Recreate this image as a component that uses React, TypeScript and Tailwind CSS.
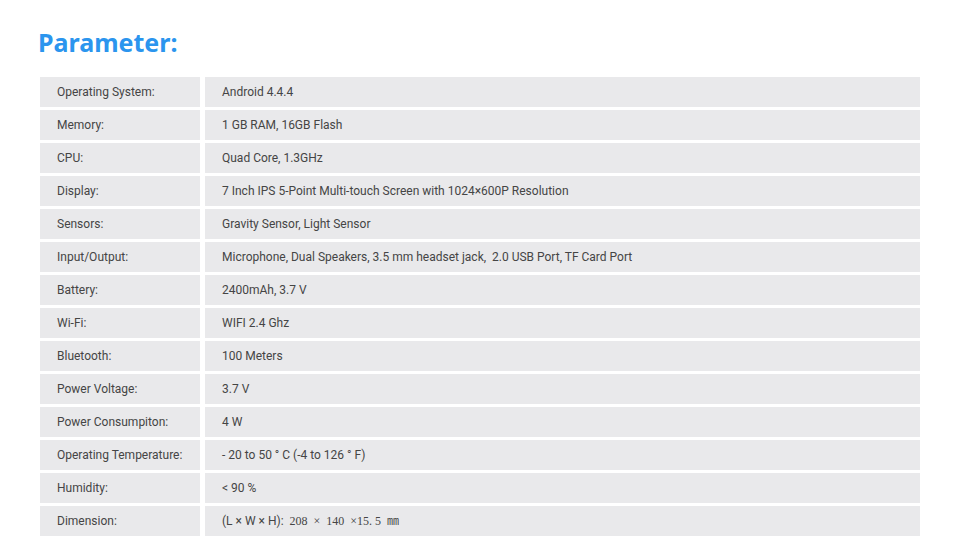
const rows: [string, React.ReactNode][] = [
  ["Operating System:", "Android 4.4.4"],
  ["Memory:", "1 GB RAM, 16GB Flash"],
  ["CPU:", "Quad Core, 1.3GHz"],
  ["Display:", "7 Inch IPS 5-Point Multi-touch Screen with 1024×600P Resolution"],
  ["Sensors:", "Gravity Sensor, Light Sensor"],
  ["Input/Output:", "Microphone, Dual Speakers, 3.5 mm headset jack,  2.0 USB Port, TF Card Port"],
  ["Battery:", "2400mAh, 3.7 V"],
  ["Wi-Fi:", "WIFI 2.4 Ghz"],
  ["Bluetooth:", "100 Meters"],
  ["Power Voltage:", "3.7 V"],
  ["Power Consumpiton:", "4 W"],
  ["Operating Temperature:", "- 20 to 50 ° C (-4 to 126 ° F)"],
  ["Humidity:", "< 90 %"],
  [
    "Dimension:",
    <>
      (L × W × H):{"  "}
      <span className="font-['Liberation_Serif','Noto_Sans_CJK_SC',serif] text-[12px]">
        208  ×  140  ×15. 5  ㎜
      </span>
    </>,
  ],
];

export default function App() {
  return (
    <div className="h-[558px] w-[960px] bg-white font-['Roboto',sans-serif]">
      <div className="px-10 pt-[26px]">
        <h1 className="-ml-[2px] font-['Noto_Sans',sans-serif] text-[25px] leading-[32px] font-bold text-[#2b95ee]">
          Parameter:
        </h1>
        <div className="mt-[19px] flex w-[880px] flex-col gap-[3px]">
          {rows.map(([label, value], i) => (
            <div key={i} className="flex h-[30px] gap-[5px] text-[12px] text-[#454545]">
              <div className="flex w-[160px] items-center bg-[#e9e9eb] pl-[17px]">{label}</div>
              <div className="flex flex-1 items-center bg-[#e9e9eb] pl-[17px] whitespace-pre">
                {value}
              </div>
            </div>
          ))}
        </div>
      </div>
    </div>
  );
}
